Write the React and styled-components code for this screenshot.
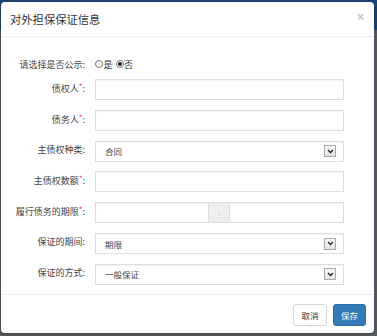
import React from 'react';
import styled, { createGlobalStyle } from 'styled-components';

const Global = createGlobalStyle`
  html, body {
    margin: 0;
    padding: 0;
  }
  body {
    width: 377px;
    height: 336px;
    overflow: hidden;
    background: linear-gradient(to bottom, #1d4474 0, #1d4474 30px, #5c5f63 30px, #5c5f63 100%);
    font-family: "Noto Sans CJK SC", "Noto Sans", sans-serif;
    color: #333;
  }
`;

const Backdrop = styled.div`
  padding: 2px 3px 3px 1px;
  box-sizing: border-box;
  height: 336px;
`;

const Modal = styled.div`
  background: #fff;
  border-radius: 4px;
  height: 331px;
  display: flex;
  flex-direction: column;
  box-shadow: 0 2px 6px rgba(0, 0, 0, 0.3);
`;

const Header = styled.div`
  height: 34px;
  flex: none;
  display: flex;
  align-items: center;
  justify-content: space-between;
  padding: 0 10px 0 9px;
  border-bottom: 1px solid #ececec;
`;

const Title = styled.div`
  font-size: 11.3px;
  color: #333;
`;

const Close = styled.span`
  font-family: "Liberation Sans", Arial, sans-serif;
  font-size: 12px;
  font-weight: bold;
  color: #c4c4c4;
  margin-top: -4px;
`;

const Body = styled.div`
  flex: 1;
  padding: 17px 30px 9px 0;
  display: flex;
  flex-direction: column;
  gap: 9.85px;
`;

const Row = styled.div`
  display: grid;
  grid-template-columns: 84px 1fr;
  column-gap: 10px;
  height: ${p => (p.$short ? '20px' : '21px')};
  margin-bottom: ${p => (p.$short ? '-5px' : '0')};
`;

const Label = styled.div`
  font-size: 9px;
  text-align: right;
  padding-top: ${p => (p.$center ? '0' : '2px')};
  align-self: ${p => (p.$center ? 'center' : 'start')};
  white-space: nowrap;
  color: #444;
`;

const Star = styled.span`
  color: #e33;
  font-size: 8px;
  vertical-align: 2px;
`;

const Radios = styled.div`
  display: flex;
  align-items: center;
  font-size: 9px;
  color: #333;
`;

const RadioItem = styled.label`
  display: flex;
  align-items: center;
  margin-right: 3px;
`;

const Circle = styled.span`
  width: 8px;
  height: 8px;
  border: 1px solid #777;
  border-radius: 50%;
  box-sizing: border-box;
  display: inline-flex;
  align-items: center;
  justify-content: center;
  margin-right: 0.5px;
  background: #fff;
  &::after {
    content: '';
    width: 4px;
    height: 4px;
    border-radius: 50%;
    background: ${p => (p.$checked ? '#222' : 'transparent')};
  }
`;

const Input = styled.div`
  border: 1px solid #dedede;
  box-shadow: inset 0 1px 1px rgba(0, 0, 0, 0.05);
  background: #fff;
  box-sizing: border-box;
  height: 100%;
  display: flex;
  align-items: center;
  padding: 0 7px 0 9px;
  font-size: 8.5px;
  color: #444;
  flex: ${p => p.$grow || 'initial'};
`;

const SelectText = styled.span`
  flex: 1;
`;

const Arrow = styled.span`
  width: 12px;
  height: 12px;
  box-sizing: border-box;
  border: 1px solid #a9a9a9;
  background: linear-gradient(#f7f7f7, #e3e3e3);
  display: flex;
  align-items: center;
  justify-content: center;
`;

const Range = styled.div`
  display: flex;
  height: 100%;
`;

const Addon = styled.div`
  width: 20px;
  flex: none;
  background: #eee;
  border-top: 1px solid #dedede;
  border-bottom: 1px solid #dedede;
  box-sizing: border-box;
  display: flex;
  align-items: center;
  justify-content: center;
  font-size: 7px;
  color: #999;
`;

const Footer = styled.div`
  flex: none;
  height: 39px;
  border-top: 1px solid #ececec;
  display: flex;
  justify-content: flex-end;
  align-items: flex-start;
  gap: 6px;
  padding: 9px 8px 0 0;
  box-sizing: border-box;
`;

const Button = styled.button`
  height: 22px;
  width: ${p => p.$w}px;
  padding: 0;
  border-radius: 3px;
  font-family: "Noto Sans CJK SC", sans-serif;
  font-size: 8.5px;
  border: 1px solid ${p => (p.$primary ? '#2e6da4' : '#d6d6d6')};
  background: ${p => (p.$primary ? '#337ab7' : '#fff')};
  color: ${p => (p.$primary ? '#fff' : '#333')};
`;

const Chevron = () => (
  <svg width="7" height="5" viewBox="0 0 7 5">
    <path d="M1 1 L3.5 3.5 L6 1" fill="none" stroke="#222" strokeWidth="1.3" />
  </svg>
);

const Select = ({ value }) => (
  <Input>
    <SelectText>{value}</SelectText>
    <Arrow><Chevron /></Arrow>
  </Input>
);

const Field = ({ label, required, children }) => (
  <Row>
    <Label>
      {label}
      {required && <Star>*</Star>}:
    </Label>
    {children}
  </Row>
);

export default function App() {
  return (
    <>
      <Global />
      <Backdrop>
        <Modal>
          <Header>
            <Title>对外担保保证信息</Title>
            <Close>×</Close>
          </Header>
          <Body>
            <Row $short>
              <Label $center>请选择是否公示:</Label>
              <Radios>
                <RadioItem><Circle />是</RadioItem>
                <RadioItem><Circle $checked />否</RadioItem>
              </Radios>
            </Row>
            <Field label="债权人" required><Input /></Field>
            <Field label="债务人" required><Input /></Field>
            <Field label="主债权种类"><Select value="合同" /></Field>
            <Field label="主债权数额" required><Input /></Field>
            <Field label="履行债务的期限" required>
              <Range>
                <Input $grow="0 0 114px" />
                <Addon>-</Addon>
                <Input $grow="1" />
              </Range>
            </Field>
            <Field label="保证的期间"><Select value="期限" /></Field>
            <Field label="保证的方式"><Select value="一般保证" /></Field>
          </Body>
          <Footer>
            <Button $w={34}>取消</Button>
            <Button $w={33} $primary>保存</Button>
          </Footer>
        </Modal>
      </Backdrop>
    </>
  );
}
